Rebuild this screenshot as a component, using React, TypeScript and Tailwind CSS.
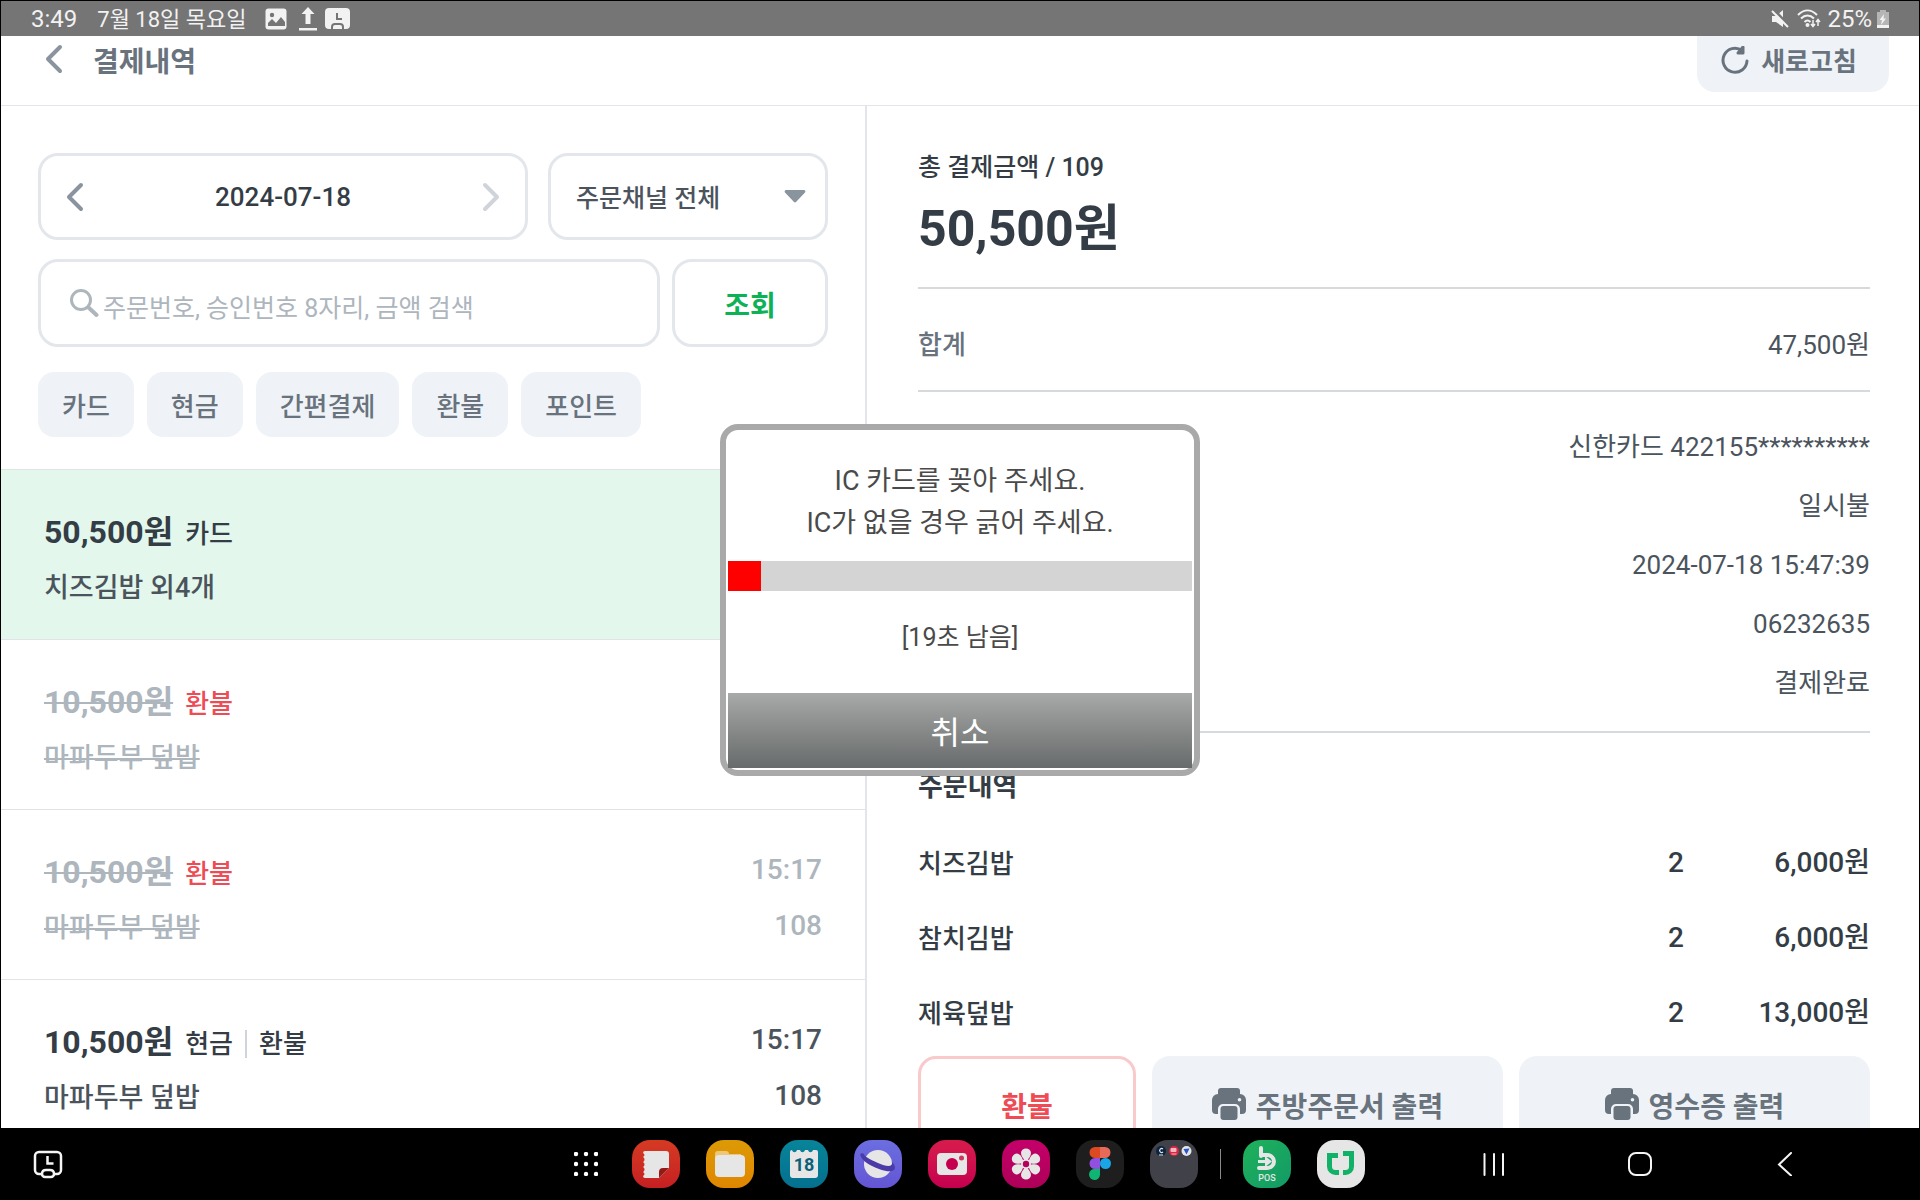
import React from 'react';

const filters = ['카드', '현금', '간편결제', '환불', '포인트'];

const payments = [
  { id: 1, amount: '50,500원', tags: ['카드'], menu: '치즈김밥 외4개', state: 'selected' },
  { id: 2, amount: '10,500원', tags: ['환불'], menu: '마파두부 덮밥', state: 'refunded' },
  { id: 3, amount: '10,500원', tags: ['환불'], menu: '마파두부 덮밥', time: '15:17', order: '108', state: 'refunded' },
  { id: 4, amount: '10,500원', tags: ['현금', '환불'], menu: '마파두부 덮밥', time: '15:17', order: '108', state: 'normal' },
];

const cardInfo = ['신한카드 422155**********', '일시불', '2024-07-18 15:47:39', '06232635', '결제완료'];

const orderItems = [
  { name: '치즈김밥', qty: 2, price: '6,000원' },
  { name: '참치김밥', qty: 2, price: '6,000원' },
  { name: '제육덮밥', qty: 2, price: '13,000원' },
];

function Chevron({ className, flip = false }: { className: string; flip?: boolean }) {
  return (
    <svg className={className} viewBox="0 0 18 30" fill="none" stroke="currentColor" strokeWidth="4" strokeLinecap="round" strokeLinejoin="round">
      <path d={flip ? 'M3 3l12 12L3 27' : 'M15 3L3 15l12 12'} />
    </svg>
  );
}

function PrinterIcon() {
  return (
    <svg className="h-8 w-[34px] shrink-0" viewBox="0 0 34 32" fill="currentColor">
      <path d="M9 0h16a3 3 0 0 1 3 3v3.500H6V3a3 3 0 0 1 3-3z" />
      <path d="M6 6h22a6 6 0 0 1 6 6v10a4 4 0 0 1-4 4h-2v-5a5 5 0 0 0-5-5H11a5 5 0 0 0-5 5v5H4a4 4 0 0 1-4-4V12a6 6 0 0 1 6-6zm21.500 4a1.800 1.800 0 1 0 0 3.600 1.800 1.800 0 0 0 0-3.600z" fillRule="evenodd" />
      <path d="M11.500 18h11a3 3 0 0 1 3 3v8a3 3 0 0 1-3 3h-11a3 3 0 0 1-3-3v-8a3 3 0 0 1 3-3z" />
    </svg>
  );
}

function StatusBar() {
  return (
    <div className="flex h-[35px] shrink-0 items-center justify-between bg-[#757575] px-[30px] text-[#f2f2f2]">
      <div className="flex items-center">
        <span className="text-[24px] leading-8">3:49</span>
        <span className="ml-5 pt-[2px] text-[22px] leading-8">7월 18일 목요일</span>
        <svg className="ml-[18px] h-[22px] w-[22px]" viewBox="0 0 22 22">
          <rect x="0.500" y="0.500" width="21" height="21" rx="3" fill="currentColor" />
          <circle cx="7" cy="7" r="2.200" fill="#757575" />
          <path d="M3 18v-3l4-4 4 4 5-6 4 5v4z" fill="#757575" />
        </svg>
        <svg className="ml-3 h-6 w-[18px]" viewBox="0 0 18 24" fill="currentColor">
          <path d="M9 0l6.500 7h-4v10h-5V7h-4zM0 21h18v2.500H0z" />
        </svg>
        <svg className="ml-2 h-[22px] w-[25px]" viewBox="0 0 25 22" fill="none">
          <rect width="25" height="21" rx="4" fill="currentColor" />
          <path d="M12 5v6h5" stroke="#757575" strokeWidth="2" />
          <path d="M7 22v-3a3 3 0 0 1 3-3h5a3 3 0 0 1 3 3v3" stroke="#757575" strokeWidth="2" />
        </svg>
      </div>
      <div className="flex items-center">
        <svg className="h-[18px] w-[18px]" viewBox="0 0 18 18">
          <path d="M1 6h4l7-6v17l-7-5H1z" fill="currentColor" />
          <path d="M3 0l15 16" stroke="#757575" strokeWidth="3" />
          <path d="M1 1l16 16" stroke="currentColor" strokeWidth="2" />
        </svg>
        <svg className="ml-2 h-5 w-6" viewBox="0 0 24 20" fill="none" stroke="currentColor" strokeWidth="2">
          <path d="M1 6c6-6 13-6 19 0M4 9.500c4-4 9-4 13 0M7.500 13c2-2 4-2 6 0" />
          <circle cx="10.500" cy="16" r="1" fill="currentColor" />
          <path d="M16 11v6m-2-2l2 2.500 2-2.500M21 17v-6m-2 2l2-2.500 2 2.500" strokeWidth="1.500" />
        </svg>
        <span className="ml-[6px] text-[24px] leading-8">25%</span>
        <svg className="ml-[5px] h-[18px] w-3" viewBox="0 0 12 18">
          <path d="M3 0h6v2h3v16H0V2h3z" fill="#b5b5b5" />
          <path d="M0 15h12v3H0z" fill="#f2f2f2" />
          <path d="M7 4L2.500 10H5l-1 5 5-6.500H6.500z" fill="#f2f2f2" />
        </svg>
      </div>
    </div>
  );
}

function Header() {
  return (
    <header className="flex h-[70px] shrink-0 items-start justify-between overflow-hidden border-b border-[#e3e5ea] pr-[30px] pl-[44px] text-[#69737d]">
      <div className="flex h-[46px] items-center gap-[30px]">
        <button aria-label="뒤로" className="text-[#8a949e]">
          <Chevron className="h-[30px] w-[18px]" />
        </button>
        <h1 className="pt-2 text-[28px] leading-10 font-bold">결제내역</h1>
      </div>
      <button className="flex h-[56px] w-[192px] items-center justify-center gap-3 rounded-b-[18px] bg-[#eff3f7] pr-2 pb-2 text-[26px] leading-10 font-bold">
        <svg className="h-7 w-7" viewBox="0 0 28 28" fill="none" stroke="currentColor" strokeWidth="3" strokeLinecap="round" strokeLinejoin="round">
          <path d="M26 15a12 12 0 1 1-5-10.500" />
          <path d="M22 1v6h-5z" fill="currentColor" />
        </svg>
        <span className="pt-1">새로고침</span>
      </button>
    </header>
  );
}

function SearchFilters() {
  return (
    <div className="px-[37px] pt-[47px] pb-8">
      <div className="grid grid-cols-[490fr_280fr] gap-5">
        <div className="flex h-[87px] items-center justify-between rounded-[20px] border-3 border-[#e3e7eb] px-[25px]">
          <button aria-label="이전 날짜" className="text-[#8a949e]">
            <Chevron className="h-[30px] w-[18px]" />
          </button>
          <span className="text-[26px] leading-10 font-medium text-[#343d45]">2024-07-18</span>
          <button aria-label="다음 날짜" className="text-[#ced4da]">
            <Chevron className="h-[30px] w-[18px]" flip />
          </button>
        </div>
        <div className="relative h-[87px]">
          <select aria-label="주문채널" className="h-full w-full appearance-none rounded-[20px] border-3 border-[#e3e7eb] bg-white px-[25px] pt-1 text-[25px] font-medium text-[#4b545d]">
            <option>주문채널 전체</option>
          </select>
          <svg className="pointer-events-none absolute top-[37px] right-[22px] h-[13px] w-[22px] text-[#8a949e]" viewBox="0 0 22 13" fill="currentColor">
            <path d="M2 0h18a1.500 1.500 0 0 1 1 2.500l-9 9.500a1.500 1.500 0 0 1-2 0L1 2.500A1.500 1.500 0 0 1 2 0z" />
          </svg>
        </div>
      </div>

      <form className="mt-[19px] grid grid-cols-[622fr_156fr] gap-3">
        <label className="flex h-[88px] items-center rounded-[20px] border-3 border-[#e3e7eb] pr-5 pl-[28px] text-[#adb5bd]">
          <svg className="h-[30px] w-[30px] shrink-0" viewBox="0 0 30 30" fill="none" stroke="currentColor" strokeWidth="3" strokeLinecap="round">
            <circle cx="12" cy="12" r="9.500" />
            <path d="M19.500 19.500l8 7.500" strokeWidth="4" />
          </svg>
          <input
            aria-label="결제 검색"
            placeholder="주문번호, 승인번호 8자리, 금액 검색"
            className="ml-1 w-full min-w-0 pt-3 text-[25px] outline-none placeholder:text-[#adb5bd]"
          />
        </label>
        <button type="button" className="h-[88px] rounded-[20px] border-3 border-[#e3e7eb] pt-2 text-[28px] font-bold text-[#0db256]">
          조회
        </button>
      </form>

      <div className="mt-[25px] flex gap-[13px]">
        {filters.map((filter) => (
          <button key={filter} className="h-[65px] rounded-[16px] bg-[#eff3f7] px-6 pt-[6px] text-[26px] font-medium text-[#69737d]">
            {filter}
          </button>
        ))}
      </div>
    </div>
  );
}

function PaymentList() {
  return (
    <ul>
      {payments.map((p) => {
        const refunded = p.state === 'refunded';
        return (
          <li
            key={p.id}
            className={`flex h-[170px] justify-between border-t border-[#e1e4e7] pr-[43px] pl-[43px] ${p.state === 'selected' ? 'bg-[#e3f7ec]' : 'bg-white'}`}
          >
            <div className="pt-[42px]">
              <div className="flex h-10 items-center">
                <span className={`text-[32px] leading-10 font-bold ${refunded ? 'text-[#adb5bd] line-through decoration-2' : 'text-[#343d45]'}`}>
                  {p.amount}
                </span>
                <span className={`ml-3 flex items-center pt-1 text-[26px] leading-10 font-medium ${refunded ? 'text-[#ee4b55]' : 'text-[#343d45]'}`}>
                  {p.tags.map((tag, i) => (
                    <React.Fragment key={tag}>
                      {i > 0 && <span className="mx-3 h-7 w-[2px] bg-[#ced4da]" />}
                      {tag}
                    </React.Fragment>
                  ))}
                </span>
              </div>
              <p className={`mt-4 text-[27px] leading-10 font-medium ${refunded ? 'text-[#adb5bd] line-through decoration-2' : 'text-[#4b545d]'}`}>
                {p.menu}
              </p>
            </div>
            {p.time && (
              <div className={`pt-10 text-right text-[28px] leading-10 font-medium ${refunded ? 'text-[#adb5bd]' : 'text-[#4b545d]'}`}>
                <p>{p.time}</p>
                <p className="mt-4">{p.order}</p>
              </div>
            )}
          </li>
        );
      })}
    </ul>
  );
}

function PaymentDetail() {
  return (
    <section className="overflow-hidden pt-[42px] pr-[49px] pl-[51px] text-[#343d45]">
      <p className="text-[25px] leading-10 font-medium">총 결제금액 / 109</p>
      <p className="mt-[6px] text-[50px] leading-[70px] font-bold">50,500원</p>

      <div className="mt-[23px] flex h-[103px] items-center justify-between border-t-2 border-[#d6dadd] pt-3 text-[26px] text-[#4b545d]">
        <span className="font-medium text-[#69737d]">합계</span>
        <span>47,500원</span>
      </div>

      <ul className="border-y-2 border-[#d6dadd] pt-[26px] pb-[18px] text-right text-[26px] text-[#4b545d]">
        {cardInfo.map((line) => (
          <li key={line} className="leading-[59px]">{line}</li>
        ))}
      </ul>

      <h2 className="mt-[34px] text-[27px] leading-10 font-bold">주문내역</h2>
      <table className="mt-[18px] w-full text-[26px] font-medium">
        <tbody>
          {orderItems.map((item) => (
            <tr key={item.name} className="h-[75px]">
              <td className="pt-1">{item.name}</td>
              <td className="w-[60px] text-[28px]">{item.qty}</td>
              <td className="w-[142px] text-right text-[28px]">{item.price}</td>
            </tr>
          ))}
        </tbody>
      </table>

      <div className="mt-[6px] grid grid-cols-[218fr_351fr_351fr] gap-4 text-[28px] font-bold">
        <button className="h-[100px] rounded-[18px] border-3 border-[#f9c9cc] pt-1 text-[#ee4b55]">환불</button>
        <button className="flex h-[100px] items-center justify-center gap-[10px] rounded-[18px] bg-[#eff3f7] pb-1 text-[#69737d]">
          <PrinterIcon />
          <span className="pt-2">주방주문서 출력</span>
        </button>
        <button className="flex h-[100px] items-center justify-center gap-[10px] rounded-[18px] bg-[#eff3f7] pb-1 text-[#69737d]">
          <PrinterIcon />
          <span className="pt-2">영수증 출력</span>
        </button>
      </div>
    </section>
  );
}

function CardDialog() {
  const total = 464;
  const elapsed = 33;
  return (
    <div className="fixed inset-0 flex items-center justify-center">
      <div role="dialog" aria-label="카드 결제" className="w-[480px] rounded-[18px] border-6 border-[#a9a9a9] bg-white p-[2px] text-center text-[#4a4a4a]">
        <p className="pt-[28px] text-[27px] leading-[42px]">
          IC 카드를 꽂아 주세요.
          <br />
          IC가 없을 경우 긁어 주세요.
        </p>
        <div className="mt-[17px] h-[30px] bg-[#d4d4d4]">
          <div className="h-full bg-[#ff0000]" style={{ width: `${(elapsed / total) * 100}%` }} />
        </div>
        <p className="mt-[27px] text-[25px] leading-10">[19초 남음]</p>
        <button className="mt-[35px] h-[75px] w-full bg-linear-to-b from-[#a8aaa9] to-[#686b6b] pt-1 text-[32px] text-white">취소</button>
      </div>
    </div>
  );
}

const apps = [
  {
    name: 'Notes',
    className: 'bg-linear-to-b from-[#d63a22] to-[#c41f22]',
    icon: (
      <>
        <path d="M13 11h21a3 3 0 0 1 3 3v14L27 38H13a2 2 0 0 1-2-2c2-1 2-3 0-4 2-1 2-4 0-5 2-1 2-4 0-5 2-1 2-4 0-5 2-1 2-3 0-4a2 2 0 0 1 2-2z" fill="#e6e6e6" />
        <path d="M37 28L27 38v-6a4 4 0 0 1 4-4z" fill="#941a17" />
      </>
    ),
  },
  {
    name: 'Files',
    className: 'bg-linear-to-b from-[#dc9a06] to-[#e08600]',
    icon: (
      <>
        <path d="M9 14a3 3 0 0 1 3-3h8a3 3 0 0 1 3 3h12v8H9z" fill="#eec678" />
        <rect x="9" y="15" width="30" height="22" rx="4" fill="#e6e6e6" />
      </>
    ),
  },
  {
    name: 'Calendar',
    className: 'bg-linear-to-b from-[#088499] to-[#04708f]',
    icon: (
      <>
        <path d="M10 12a2 2 0 0 1 2-2c1 3 4 3 5 0h3c1 3 4 3 5 0h3c1 3 4 3 5 0h3a2 2 0 0 1 2 2v23a3 3 0 0 1-3 3H13a3 3 0 0 1-3-3z" fill="#e6e6e6" />
        <text x="24" y="31" textAnchor="middle" fontSize="18" fontWeight="700" fill="#0b5f78">18</text>
      </>
    ),
  },
  {
    name: 'Internet',
    className: 'bg-linear-to-b from-[#6b6ee0] to-[#6455d4]',
    icon: (
      <>
        <circle cx="24" cy="24" r="14" fill="#e6e6e6" />
        <path d="M10 14c-6-3-5 5 6 11 11 6 24 9 25 3 0-3-2-5-3-6 1 5-5 5-14 1-9-4-14-7-14-9z" fill="#4a3ba8" />
      </>
    ),
  },
  {
    name: 'Camera',
    className: 'bg-linear-to-b from-[#d81b4c] to-[#c5004f]',
    icon: (
      <>
        <rect x="9" y="13" width="30" height="22" rx="4" fill="#e6e6e6" />
        <circle cx="24" cy="24" r="6" fill="#c5004f" />
        <circle cx="33.500" cy="18" r="2.500" fill="#d0365c" />
      </>
    ),
  },
  {
    name: 'Gallery',
    className: 'bg-linear-to-b from-[#c4006a] to-[#ad0058]',
    icon: (
      <>
        {[0, 60, 120, 180, 240, 300].map((angle) => (
          <path key={angle} d="M24 22c-3-4-5-6-5-9a5 4.500 0 0 1 10 0c0 3-2 5-5 9z" fill="#e6e6e6" transform={`rotate(${angle} 24 24)`} />
        ))}
        <circle cx="24" cy="24" r="5" fill="#e6e6e6" />
        <circle cx="24" cy="24" r="3.200" fill="#b8005f" />
      </>
    ),
  },
  {
    name: 'Figma',
    className: 'bg-[#1e1e1e]',
    icon: (
      <>
        <path d="M24 7h-5a5.500 5.500 0 0 0 0 11h5z" fill="#dc4a22" />
        <path d="M24 7h5a5.500 5.500 0 0 1 0 11h-5z" fill="#e6695a" />
        <path d="M24 18h-5a5.500 5.500 0 0 0 0 11h5z" fill="#9250e0" />
        <circle cx="29.500" cy="23.500" r="5.500" fill="#1aa6e6" />
        <path d="M24 29h-5a5.500 5.500 0 1 0 5 5.500z" fill="#0fb673" />
      </>
    ),
  },
  {
    name: 'Folder',
    className: 'bg-[#41414a]',
    icon: (
      <>
        <circle cx="11" cy="11" r="5" fill="#0b2440" />
        <path d="M13 9a2 2 0 1 0 0 3M9 15h4" stroke="#e6e6e6" strokeWidth="1.200" fill="none" />
        <circle cx="24" cy="11" r="5" fill="#dc2742" />
        <path d="M21 8.500h5v3h-5zM21.500 14h5" stroke="#f3b6bf" strokeWidth="1" fill="#f3b6bf" />
        <circle cx="36.500" cy="11" r="5" fill="#e6e6e6" />
        <path d="M33.500 9l6-.5-3 6z" fill="#2458c8" />
      </>
    ),
  },
];

const pinned = [
  {
    name: 'POS',
    className: 'bg-linear-to-br from-[#1fb25a] to-[#129a66]',
    icon: (
      <>
        <path d="M18 8v8M18 15h6a7 6.500 0 0 1 0 13h-8" stroke="#e6e6e6" strokeWidth="4" fill="none" strokeLinecap="round" />
        <path d="M15 20h7v-4l7 5.500-7 5.500v-4h-7z" fill="#e6e6e6" />
        <text x="24" y="41" textAnchor="middle" fontSize="9" fontWeight="500" fill="#e6e6e6">POS</text>
      </>
    ),
  },
  {
    name: 'Order',
    className: 'bg-[#e6e6e6]',
    icon: <path d="M21 15.500h-8.500v11a6 6 0 0 0 6 6H22M26 13.500h8.500v13a6 6 0 0 1-6 6H26" stroke="#12b168" strokeWidth="5" fill="none" />,
  },
];

function AppIcon({ app }: { app: (typeof apps)[number] }) {
  return (
    <button aria-label={app.name} className={`h-12 w-12 overflow-hidden rounded-[18px] ${app.className}`}>
      <svg className="h-12 w-12" viewBox="0 0 48 48">{app.icon}</svg>
    </button>
  );
}

function Taskbar() {
  return (
    <nav className="grid h-[72px] shrink-0 grid-cols-[1fr_auto_1fr] items-center bg-black pl-[18px] text-[#f5f5f5]">
      <div className="flex items-center pl-[15px]">
        <button aria-label="화면 캡처">
          <svg className="h-[30px] w-[30px]" viewBox="0 0 30 30" fill="none" stroke="currentColor" strokeWidth="2.500">
            <path d="M8 25H6a4 4 0 0 1-4-4V7a4 4 0 0 1 4-4h18a4 4 0 0 1 4 4v14a4 4 0 0 1-4 4h-2" />
            <path d="M14.500 7v7.500h6" />
            <path d="M12 28a3 3 0 0 1-3-3c0-2 1-4 4-4h4c3 0 4 2 4 4a3 3 0 0 1-3 3z" />
          </svg>
        </button>
      </div>
      <div className="flex items-center gap-[26px]">
        <button aria-label="앱 목록" className="mr-2">
          <svg className="h-6 w-6" viewBox="0 0 24 24" fill="white">
            {[2, 12, 22].map((y) => [2, 12, 22].map((x) => <circle key={`${x}-${y}`} cx={x} cy={y} r="2.200" />))}
          </svg>
        </button>
        {apps.map((app) => <AppIcon key={app.name} app={app} />)}
        <span className="-mx-1 h-[30px] w-px bg-[#8a8a8a]" />
        {pinned.map((app) => <AppIcon key={app.name} app={app} />)}
      </div>
      <div className="flex items-center justify-end gap-[122px] pr-[122px]">
        <button aria-label="최근 앱">
          <svg className="h-6 w-6" viewBox="0 0 24 24" stroke="currentColor" strokeWidth="2" strokeLinecap="round">
            <path d="M2.500 2v21M12 2v21M21 2v21" />
          </svg>
        </button>
        <button aria-label="홈">
          <svg className="h-6 w-6" viewBox="0 0 24 24" fill="none" stroke="currentColor" strokeWidth="2">
            <rect x="1" y="1" width="22" height="22" rx="7" />
          </svg>
        </button>
        <button aria-label="이전">
          <svg className="h-6 w-6" viewBox="0 0 24 24" fill="none" stroke="currentColor" strokeWidth="2" strokeLinecap="round">
            <path d="M17 1L5 12.500l12 11" />
          </svg>
        </button>
      </div>
    </nav>
  );
}

export default function App() {
  return (
    <div className="flex h-screen flex-col overflow-hidden bg-white font-[Roboto,'Noto_Sans_CJK_KR',sans-serif]">
      <div className="flex min-h-0 flex-1 flex-col border-x border-t border-black">
        <StatusBar />
        <Header />
        <main className="grid min-h-0 flex-1 grid-cols-[866fr_1052fr] overflow-hidden">
          <section className="overflow-hidden border-r-2 border-[#e3e5ea]">
            <SearchFilters />
            <PaymentList />
          </section>
          <PaymentDetail />
        </main>
      </div>
      <Taskbar />
      <CardDialog />
    </div>
  );
}
